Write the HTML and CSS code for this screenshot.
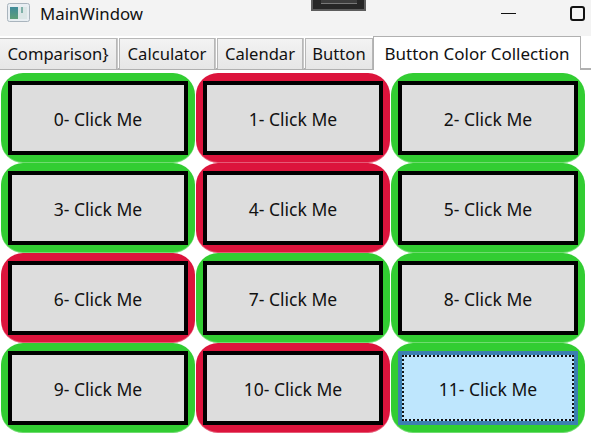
FILE: index.html
```html
<!DOCTYPE html>
<html lang="en">
<head>
    <meta charset="UTF-8">
    <title>MainWindow</title>
    <link rel="stylesheet" href="styles.css">
</head>
<body>
    <header class="titlebar">
        <svg class="app-icon" width="23" height="19" viewBox="0 0 23 19">
            <defs>
                <linearGradient id="pane" x1="0" y1="0" x2="0" y2="1">
                    <stop offset="0" stop-color="#3f8a9a"/>
                    <stop offset="1" stop-color="#5f9f78"/>
                </linearGradient>
            </defs>
            <rect x="0.5" y="0.5" width="22" height="18" rx="2" fill="#e8eef2" stroke="#a9b4bd"/>
            <rect x="3" y="4" width="8" height="12" fill="url(#pane)"/>
            <rect x="11" y="4" width="9" height="12" fill="#dbe6e6"/>
            <rect x="14" y="4" width="2" height="6" fill="#7fb0a8"/>
        </svg>
        <span class="title">MainWindow</span>
        <div class="window-buttons">
            <span class="minimize"></span>
            <span class="maximize"></span>
        </div>
        <div class="taskbar-thumb"><span></span></div>
    </header>

    <nav class="tabs">
        <div class="tab tab-comparison">Comparison}</div>
        <div class="tab tab-calculator">Calculator</div>
        <div class="tab tab-calendar">Calendar</div>
        <div class="tab tab-button">Button</div>
        <div class="tab tab-active">Button Color Collection</div>
    </nav>

    <main class="grid">
        <div class="cell green"><button class="btn">0- Click Me</button></div>
        <div class="cell red"><button class="btn">1- Click Me</button></div>
        <div class="cell green"><button class="btn">2- Click Me</button></div>
        <div class="cell green"><button class="btn">3- Click Me</button></div>
        <div class="cell red"><button class="btn">4- Click Me</button></div>
        <div class="cell green"><button class="btn">5- Click Me</button></div>
        <div class="cell red"><button class="btn">6- Click Me</button></div>
        <div class="cell green"><button class="btn">7- Click Me</button></div>
        <div class="cell green"><button class="btn">8- Click Me</button></div>
        <div class="cell green"><button class="btn">9- Click Me</button></div>
        <div class="cell red"><button class="btn">10- Click Me</button></div>
        <div class="cell green"><button class="btn btn-focused"><span class="focus-ring">11- Click Me</span></button></div>
    </main>
</body>
</html>
```

FILE: styles.css
```css
html, body {
    height: 100%;
}
body {
    margin: 0;
    background-color: #ffffff;
    font-family: "Noto Sans", "Open Sans", sans-serif;
    color: #000000;
    overflow: hidden;
    position: relative;
}
.titlebar {
    height: 36px;
    background-color: #f3f3f3;
    display: flex;
    align-items: flex-start;
    padding-left: 7px;
    box-sizing: border-box;
    position: relative;
}
.app-icon {
    margin-top: 3px;
}
.title {
    margin-left: 10px;
    margin-top: 3px;
    font-size: 16.8px;
    line-height: 22px;
    color: #111;
}
.window-buttons {
    margin-left: auto;
    display: flex;
    align-items: flex-start;
    padding-right: 6px;
}
.minimize {
    width: 15px;
    height: 1px;
    margin-top: 13px;
    background-color: #111;
}
.maximize {
    width: 11px;
    height: 11px;
    margin-top: 6px;
    margin-left: 54px;
    border: 2px solid #111;
    border-radius: 3px;
}
.taskbar-thumb {
    position: absolute;
    left: 311px;
    top: 0;
    width: 55px;
    height: 11px;
    box-sizing: border-box;
    background-color: #262626;
    border: 2px solid #5c5c5c;
    border-top: 0;
    display: flex;
    justify-content: center;
    align-items: flex-start;
}
.taskbar-thumb span {
    width: 36px;
    height: 3px;
    background-color: #3c3c3c;
    border-bottom: 1px solid #777;
}
.tabs {
    display: flex;
    align-items: flex-end;
    height: 34px;
    box-sizing: border-box;
    border-bottom: 2px solid #b0b0b0;
}
.tab {
    height: 31px;
    box-sizing: border-box;
    margin-bottom: -1px;
    margin-right: 2px;
    border: 1px solid #b7b7b7;
    border-bottom: 0;
    background: linear-gradient(#f3f3f3, #e6e6e6);
    font-size: 16.6px;
    line-height: 29px;
    text-align: center;
    color: #111;
    box-shadow: 1px 0 0 #c8c8c8;
}
.tab-comparison {
    width: 117px;
    border-left: 0;
}
.tab-calculator {
    width: 96px;
}
.tab-calendar {
    width: 86px;
}
.tab-button {
    width: 68px;
    margin-right: 0;
    box-shadow: none;
}
.tab-active {
    width: 208px;
    height: 34px;
    margin-bottom: -2px;
    margin-right: 0;
    background: #ffffff;
    border: 1px solid #b0b0b0;
    border-bottom: 0;
    font-size: 17px;
    line-height: 33px;
    box-shadow: none;
}
.grid {
    display: grid;
    grid-template-columns: repeat(3, 194px);
    grid-auto-rows: 90px;
    column-gap: 1px;
    padding: 3px 0 0 1px;
}
.cell {
    border-radius: 22px;
    padding: 8px 7px;
    display: flex;
    box-shadow: inset 0 -1px 0 rgba(255, 255, 255, 0.3);
}
.green {
    background-color: #32cd32;
}
.red {
    background-color: #dc143c;
}
.btn {
    flex: 1;
    margin: 0;
    padding: 2px 0 0;
    border: 4px solid #000000;
    border-radius: 0;
    background-color: #dddddd;
    font-family: inherit;
    font-size: 17.5px;
    color: #111;
}
.btn-focused {
    display: flex;
    background-color: #bee6fd;
    border-color: #3c7fb1;
    padding: 0;
}
.focus-ring {
    flex: 1;
    display: flex;
    align-items: center;
    justify-content: center;
    padding-top: 2px;
    border: 2px dotted #111;
}
```
